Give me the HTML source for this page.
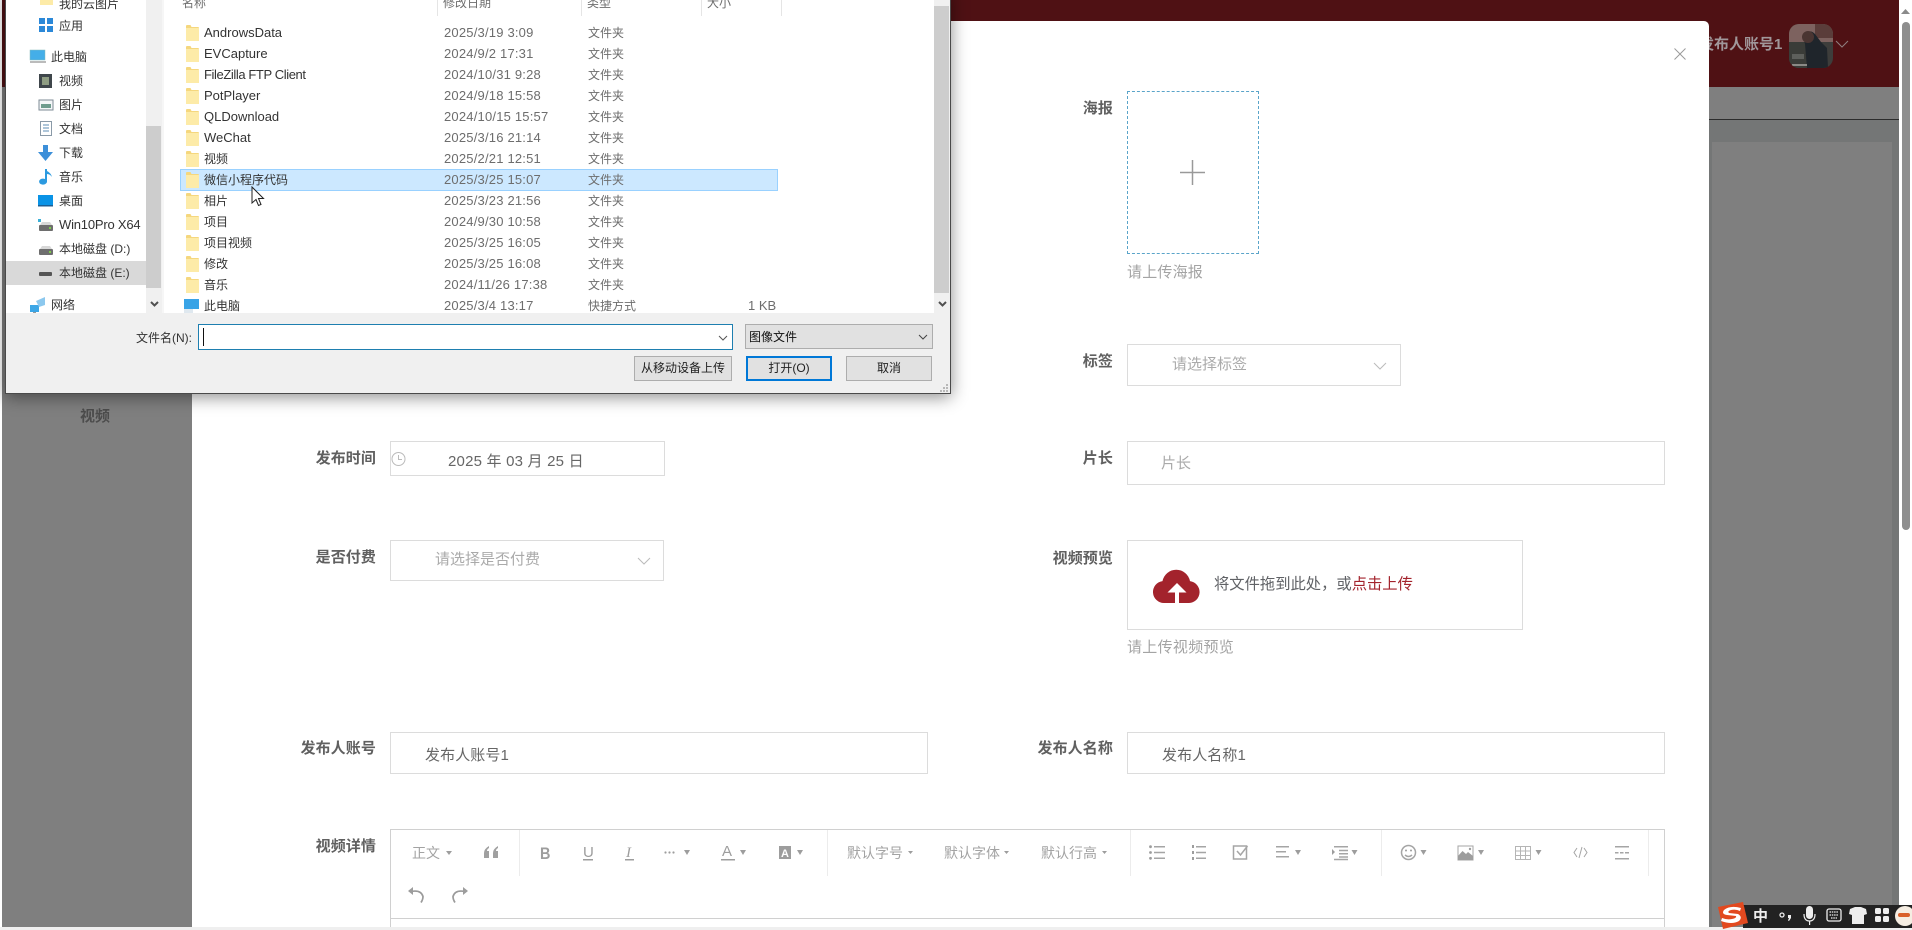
<!DOCTYPE html>
<html lang="zh"><head><meta charset="utf-8"><title>发布视频</title>
<style>
html,body{margin:0;padding:0;width:1912px;height:930px;overflow:hidden;background:#fff}
body{position:relative;font-family:"Liberation Sans","Noto Sans CJK SC",sans-serif}
.b{position:absolute}
.t{position:absolute;white-space:nowrap;line-height:20px;height:20px}
.l{font-size:15px;font-weight:700;color:#606060;text-align:right;width:120px;left:256px;letter-spacing:.1px}
.r{left:993px}
.f{position:absolute;box-sizing:border-box;border:1px solid #dcdcdc;background:#fff}
.v{font-size:15px;color:#666}
.p{font-size:15px;color:#aaa}
.h{font-size:14px;color:#a3a3a3}
#dlg{position:absolute;left:5px;top:-10px;width:946px;height:404px;box-sizing:border-box;background:#f0f0f0;border:1px solid #4a4a4a;border-top:0;box-shadow:0 3px 16px rgba(0,0,0,.45);overflow:hidden}
.d{position:absolute;left:0;top:10px;width:944px;height:393px}
.d .t{font-size:12px;color:#333;line-height:20px}
.n{font-size:13px!important}
.g{color:#6d6d6d!important}
.dt{font-size:13px!important;letter-spacing:.2px;color:#6d6d6d!important}
.btn{position:absolute;box-sizing:border-box;background:#e1e1e1;border:1px solid #adadad;font-size:12px;color:#222;text-align:center;line-height:22px;height:25px;top:356px}
</style></head><body>

<!-- page behind -->
<div class="b" style="left:2px;top:0;width:1897px;height:927px;background:#7f7f7f"></div>
<div class="b" style="left:2px;top:0;width:1897px;height:87px;background:#4f1114"></div>
<div class="b" style="left:1709px;top:119px;width:190px;height:1px;background:#2c2c2c"></div>
<div class="b" style="left:1709px;top:120px;width:190px;height:807px;background:#747676"></div>
<div class="b" style="left:1712px;top:142px;width:180px;height:785px;background:#7f7f7f"></div>
<div class="b" style="left:0;top:927px;width:1912px;height:3px;background:#efefef"></div>
<div class="t" style="left:1699px;top:35px;font-size:15px;font-weight:700;color:#a0979a">发布人账号1</div>
<div class="b" style="left:1789px;top:24px;width:44px;height:44px;border-radius:10px;overflow:hidden;background:#3d3d3b">
 <svg width="44" height="44" style="display:block"><rect width="44" height="18" fill="#7d625f"/><rect x="26" width="18" height="14" fill="#5a3d3a"/><rect y="18" width="22" height="26" fill="#3a3c38"/><path d="M14 12q6-8 12-2l6 8 6 6 1 20H18l-2-24z" fill="#1f252b"/><circle cx="19" cy="13" r="6" fill="#4a3532"/><rect x="3" y="30" width="12" height="5" fill="#5d5f5b"/><rect x="3" y="40" width="15" height="2" fill="#8b8a86"/></svg>
</div>
<svg class="b" style="left:1835px;top:39px" width="14" height="12"><path d="M1 2l6 6 6-6" fill="none" stroke="#8f7f80" stroke-width="1"/></svg>
<div class="t" style="left:80px;top:407px;font-size:15px;font-weight:700;color:#4c4c4c">视频</div>

<!-- scrollbar -->
<div class="b" style="left:1899px;top:0;width:13px;height:927px;background:#fff"></div>
<svg class="b" style="left:1899px;top:6px" width="13" height="10"><path d="M2 8l4.500-5 4.500 5z" fill="#8a8a8a"/></svg>
<div class="b" style="left:1902px;top:22px;width:8px;height:508px;border-radius:4px;background:#8e8e8e"></div>

<!-- modal -->
<div class="b" style="left:192px;top:21px;width:1517px;height:906px;background:#fff;border-radius:5px 5px 0 0">
</div>
<svg class="b" style="left:1673px;top:47px" width="14" height="14"><path d="M1.500 1.500l11 11M12.500 1.500l-11 11" stroke="#9a9a9a" stroke-width="1" fill="none"/></svg>

<!-- right column -->
<div class="t l r" style="top:99px">海报</div>
<div class="b" style="left:1127px;top:91px;width:132px;height:163px;box-sizing:border-box;border:1px dashed #5aa4c9"></div>
<svg class="b" style="left:1180px;top:160px" width="25" height="25"><path d="M12.500 0v25M0 12.500h25" stroke="#999" stroke-width="1.500"/></svg>
<div class="t" style="left:1127px;top:263px;font-size:15px;color:#a4a4a4;letter-spacing:.2px">请上传海报</div>

<div class="t l r" style="top:352px">标签</div>
<div class="f" style="left:1127px;top:344px;width:274px;height:42px"></div>
<div class="t p" style="left:1172px;top:355px">请选择标签</div>
<svg class="b" style="left:1373px;top:361px" width="14" height="10"><path d="M1 2l6 6 6-6" fill="none" stroke="#bbb" stroke-width="1"/></svg>

<div class="t l r" style="top:449px">片长</div>
<div class="f" style="left:1127px;top:441px;width:538px;height:44px"></div>
<div class="t p" style="left:1161px;top:454px">片长</div>

<div class="t l r" style="top:549px">视频预览</div>
<div class="f" style="left:1127px;top:540px;width:396px;height:90px"></div>
<svg class="b" style="left:1153px;top:568px" width="47" height="35"><path d="M11 35a11 11 0 0 1-1.500-21.900A14 14 0 0 1 37 13.100 11 11 0 0 1 36 35z" fill="#a3232c"/><path d="M24 15l9.500 9.500H26V35h-4V24.500h-7.500z" fill="#fff"/></svg>
<div class="t" style="left:1214px;top:575px;font-size:15.300px;color:#606266">将文件拖到此处，或<span style="color:#a3232c">点击上传</span></div>
<div class="t" style="left:1127px;top:638px;font-size:15px;color:#a4a4a4;letter-spacing:.3px">请上传视频预览</div>

<div class="t l r" style="top:739px">发布人名称</div>
<div class="f" style="left:1127px;top:732px;width:538px;height:42px"></div>
<div class="t v" style="left:1162px;top:746px;letter-spacing:.1px">发布人名称1</div>

<!-- left column -->
<div class="t l" style="top:449px">发布时间</div>
<div class="f" style="left:390px;top:441px;width:275px;height:35px"></div>
<svg class="b" style="left:391px;top:451px" width="15" height="16"><circle cx="7.500" cy="8" r="6.500" fill="none" stroke="#bbb"/><path d="M7.500 4v4.500h3.500" fill="none" stroke="#bbb"/></svg>
<div class="t" style="left:448px;top:452px;font-size:15px;color:#666;letter-spacing:.2px">2025 年 03 月 25 日</div>

<div class="t l" style="top:548px">是否付费</div>
<div class="f" style="left:390px;top:540px;width:274px;height:41px"></div>
<div class="t p" style="left:435px;top:550px">请选择是否付费</div>
<svg class="b" style="left:637px;top:556px" width="14" height="10"><path d="M1 2l6 6 6-6" fill="none" stroke="#bbb" stroke-width="1"/></svg>

<div class="t l" style="top:739px">发布人账号</div>
<div class="f" style="left:390px;top:732px;width:538px;height:42px"></div>
<div class="t v" style="left:425px;top:746px;letter-spacing:.1px">发布人账号1</div>

<div class="t l" style="top:837px">视频详情</div>

<!-- editor -->
<div class="f" style="left:390px;top:829px;width:1275px;height:98px;border-color:#d0d0d0;border-bottom:0"></div>
<div class="b" style="left:390px;top:918px;width:1275px;height:1px;background:#d0d0d0"></div>
<div class="t h" style="left:412px;top:843px">正文</div>
<div class="t h" style="left:847px;top:843px">默认字号</div>
<div class="t h" style="left:944px;top:843px">默认字体</div>
<div class="t h" style="left:1041px;top:843px">默认行高</div>
<svg class="b" style="left:0;top:0" width="1912" height="930" fill="#9d9d9d">
 <g stroke="#ececec" stroke-width="1"><path d="M519.500 830v46M827.500 830v46M1130.500 830v46M1381.500 830v46M1648.500 830v46"/></g>
 <g id="tri">
  <path d="M446 851h6l-3 4zM684 850h6l-3 5zM740 850h6l-3 5zM797 850h6l-3 5zM908 851h5l-2.500 3zM1004 851h5l-2.500 3zM1102 851h5l-2.500 3zM1295 850h6l-3 5zM1351.500 850h6l-3 5zM1420.500 850h6l-3 5zM1478 850h6l-3 5zM1535.500 850h6l-3 5z"/>
 </g>
 <!-- quote -->
 <path d="M484 858v-5q0-4 5-7v2q-2 1-2 3h2v7zM493 858v-5q0-4 5-7v2q-2 1-2 3h2v7z" fill="#a0a0a0"/>
 <text x="540" y="859" font-size="17" font-weight="700" font-family="Liberation Sans" transform="translate(540 0) scale(.85 1) translate(-540 0)">B</text>
 <text x="583" y="857" font-size="15" font-family="Liberation Sans">U</text>
 <rect x="583" y="859" width="10" height="1.500"/>
 <text x="626" y="857" font-size="15" font-style="italic" font-family="Liberation Serif">I</text>
 <rect x="625" y="859" width="9" height="1.500"/>
 <circle cx="665.500" cy="852.500" r="1.100"/><circle cx="669.500" cy="852.500" r="1.100"/><circle cx="673.500" cy="852.500" r="1.100"/>
 <text x="722" y="856" font-size="15" font-family="Liberation Sans">A</text>
 <rect x="721" y="859" width="14" height="1.500"/>
 <rect x="779" y="846" width="12" height="13"/>
 <text x="781" y="857" font-size="11" font-weight="700" fill="#fff" font-family="Liberation Sans">A</text>
 <!-- lists -->
 <g fill="none" stroke="#a5a5a5" stroke-width="1.500">
  <path d="M1154 846.700h11M1154 852.500h11M1154 858.300h11M1196 846.700h10M1196 852.500h10M1196 858.300h10"/>
  <path d="M1276 846.700h13M1276 851.700h10M1276 856.700h13"/>
  <path d="M1334 846.700h14M1339 850.500h9M1339 853.700h9M1339 857h9M1334 859.500h14"/>
  <rect x="1233.500" y="846" width="13" height="13"/>
  <path d="M1237 851l3.500 4 7-9"/>
  <circle cx="1408.500" cy="852.500" r="7"/>
  <path d="M1405 855q3.500 3 7 0"/>
  <path d="M1615 846.700h14M1615 858.700h14"/>
  <path d="M1615 852.700h3.500M1620 852.700h3.500M1625 852.700h4"/>
  <path d="M1577 848l-3 4.500 3 4.500M1584 848l3 4.500-3 4.500M1582 847l-3 11" stroke-width="1"/>
 </g>
 <circle cx="1150.500" cy="846.700" r="1.400"/><circle cx="1150.500" cy="852.500" r="1.400"/><circle cx="1150.500" cy="858.300" r="1.400"/>
 <rect x="1192" y="845" width="2" height="3"/><rect x="1192" y="851" width="2" height="3"/><rect x="1192" y="857" width="2" height="3"/>
 <path d="M1332 849v6l3-3z"/>
 <circle cx="1406" cy="850.500" r="1"/><circle cx="1411" cy="850.500" r="1"/>
 <!-- image -->
 <rect x="1458" y="846" width="15" height="14" fill="none" stroke="#a5a5a5"/>
 <path d="M1458 860v-4l4.500-5 3.500 3 2-2 5 4v4z"/><circle cx="1470" cy="849" r="1.200"/>
 <!-- table -->
 <g fill="none" stroke="#b5b5b5" stroke-width="1"><rect x="1515.500" y="846.500" width="15" height="13"/><path d="M1515 851h16M1515 855.500h16M1520.500 846v14M1525.500 846v14"/></g>
 <!-- undo redo -->
 <g fill="none" stroke="#9a9a9a" stroke-width="1.700">
  <path d="M411 891.500q10-2 12 5 0 3-2 6"/>
  <path d="M465 891.500q-10-2-12 5 0 3 2 6"/>
 </g>
 <path d="M408 891l5-4v8zM468 891l-5-4v8z"/>
</svg>

<!-- file dialog -->
<div id="dlg"><div class="d">
 <div class="b" style="left:0;top:0;width:944px;height:313px;background:#fff"></div>
 <!-- nav scrollbar -->
 <div class="b" style="left:140px;top:0;width:16px;height:313px;background:#f0f0f0"></div>
 <div class="b" style="left:140px;top:126px;width:15px;height:162px;background:#cdcdcd"></div>
 <div class="b" style="left:156px;top:0;width:2px;height:313px;background:#f6f6f6"></div>
 <!-- list scrollbar -->
 <div class="b" style="left:928px;top:0;width:16px;height:313px;background:#f0f0f0"></div>
 <div class="b" style="left:928px;top:6px;width:15px;height:287px;background:#cdcdcd"></div>
 <!-- selected rows -->
 <div class="b" style="left:0;top:261px;width:140px;height:24px;background:#d9d9d9"></div>
 <div class="b" style="left:174px;top:169px;width:598px;height:22px;box-sizing:border-box;background:#cce8ff;border:1px solid #99d1ff"></div>

 <!-- header -->
 <div class="t g" style="left:176px;top:-7px">名称</div>
 <div class="t g" style="left:437px;top:-7px">修改日期</div>
 <div class="t g" style="left:581px;top:-7px">类型</div>
 <div class="t g" style="left:701px;top:-7px">大小</div>
 <svg class="b" style="left:0;top:0" width="944" height="393">
  <path d="M431.500 0v16M575.500 0v16M695.500 0v16M775.500 0v16" stroke="#e5e5e5"/>
  <defs>
   <g id="fo"><path d="M0 1q0-1 1-1h3.500l1 2H12q1 0 1 1v13H0z" fill="#f5d77e"/><rect y="3" width="13" height="13" fill="#fdeba8"/></g>
   <g id="dr"><rect x="0" y="4" width="14" height="6" rx="1" fill="#6e6e6e"/><path d="M1 4l2-3h8l2 3z" fill="#d8d8d8"/><rect x="10" y="6" width="2" height="2" fill="#7ecb4a"/></g>
  </defs>
  <use href="#fo" x="180" y="25"/><use href="#fo" x="180" y="46"/><use href="#fo" x="180" y="67"/><use href="#fo" x="180" y="88"/><use href="#fo" x="180" y="109"/><use href="#fo" x="180" y="130"/><use href="#fo" x="180" y="151"/><use href="#fo" x="180" y="172"/><use href="#fo" x="180" y="193"/><use href="#fo" x="180" y="214"/><use href="#fo" x="180" y="235"/><use href="#fo" x="180" y="256"/><use href="#fo" x="180" y="277"/>
  <use href="#fo" x="34" y="-11"/>
  <!-- shortcut -->
  <rect x="178" y="299" width="15" height="10" fill="#38a3e6"/><rect x="178" y="309" width="9" height="4" fill="#dfe8ef"/>
  <!-- 应用 -->
  <g fill="#2b88d8"><rect x="33" y="18" width="6" height="6"/><rect x="41" y="18" width="6" height="6"/><rect x="33" y="26" width="6" height="6"/><rect x="41" y="26" width="6" height="6"/></g>
  <!-- 此电脑 -->
  <rect x="24" y="50" width="15" height="10" fill="#44aee8" stroke="#8bb" stroke-width=".5"/><path d="M24 62h16" stroke="#bbb" stroke-width="2"/>
  <!-- 视频 -->
  <rect x="33" y="74" width="13" height="14" fill="#3f464b"/><rect x="36" y="77" width="7" height="8" fill="#8f9d83"/>
  <!-- 图片 -->
  <rect x="33" y="100" width="14" height="10" fill="#f4f6f8" stroke="#7e8b95"/><rect x="35" y="104" width="10" height="4" fill="#6f9c8e"/>
  <!-- 文档 -->
  <rect x="34.500" y="121.500" width="11" height="14" fill="#fff" stroke="#8a9aa8"/><path d="M37 125h6M37 128h6M37 131h6" stroke="#5e8cb5"/>
  <!-- 下载 -->
  <path d="M37 145h5v7h5l-7.500 9-7.500-9h5z" fill="#3c8fd9"/>
  <!-- 音乐 -->
  <path d="M39 169h2v2q4 2 5 6-2-3-5-3v8a4 3 0 1 1-2-3z" fill="#2b9ae0"/>
  <!-- 桌面 -->
  <rect x="32" y="195" width="15" height="11" fill="#0a93e6"/><rect x="32" y="205" width="15" height="1.500" fill="#1c5f94"/>
  <!-- disks -->
  <g fill="#3bb0d8"><rect x="32" y="219" width="3" height="3"/><rect x="36" y="222" width="2" height="2"/></g>
  <use href="#dr" x="33" y="221"/><use href="#dr" x="33" y="245"/>
  <rect x="33" y="272" width="13" height="4" rx="1" fill="#555"/>
  <!-- 网络 -->
  <path d="M24 305h9v7h-9z" fill="#3ba6e6"/><path d="M30 301l9-4v8l-6 2z" fill="#8cc8ee"/><rect x="27" y="312" width="3" height="1" fill="#999"/>
  <!-- arrows -->
  <path d="M145 302l3.500 3.500 3.500-3.500M933 302l3.500 3.500 3.500-3.500" fill="none" stroke="#505050" stroke-width="2"/>
 </svg>

 <!-- nav text -->
 <div class="t" style="left:53px;top:-6px">我的云图片</div>
 <div class="t" style="left:53px;top:16px">应用</div>
 <div class="t" style="left:45px;top:47px">此电脑</div>
 <div class="t" style="left:53px;top:71px">视频</div>
 <div class="t" style="left:53px;top:95px">图片</div>
 <div class="t" style="left:53px;top:119px">文档</div>
 <div class="t" style="left:53px;top:143px">下载</div>
 <div class="t" style="left:53px;top:167px">音乐</div>
 <div class="t" style="left:53px;top:191px">桌面</div>
 <div class="t n" style="left:53px;top:215px;letter-spacing:-.2px">Win10Pro X64</div>
 <div class="t" style="left:53px;top:239px">本地磁盘 (D:)</div>
 <div class="t" style="left:53px;top:263px">本地磁盘 (E:)</div>
 <div class="t" style="left:45px;top:295px">网络</div>

 <!-- names -->
 <div class="t n" style="left:198px;top:23px">AndrowsData</div>
 <div class="t n" style="left:198px;top:44px">EVCapture</div>
 <div class="t n" style="left:198px;top:65px;letter-spacing:-.4px">FileZilla FTP Client</div>
 <div class="t n" style="left:198px;top:86px">PotPlayer</div>
 <div class="t n" style="left:198px;top:107px">QLDownload</div>
 <div class="t n" style="left:198px;top:128px">WeChat</div>
 <div class="t" style="left:198px;top:149px">视频</div>
 <div class="t" style="left:198px;top:170px">微信小程序代码</div>
 <div class="t" style="left:198px;top:191px">相片</div>
 <div class="t" style="left:198px;top:212px">项目</div>
 <div class="t" style="left:198px;top:233px">项目视频</div>
 <div class="t" style="left:198px;top:254px">修改</div>
 <div class="t" style="left:198px;top:275px">音乐</div>
 <div class="t" style="left:198px;top:296px;height:17px;overflow:hidden">此电脑</div>

 <!-- dates -->
 <div class="t dt" style="left:438px;top:23px">2025/3/19 3:09</div>
 <div class="t dt" style="left:438px;top:44px">2024/9/2 17:31</div>
 <div class="t dt" style="left:438px;top:65px">2024/10/31 9:28</div>
 <div class="t dt" style="left:438px;top:86px">2024/9/18 15:58</div>
 <div class="t dt" style="left:438px;top:107px">2024/10/15 15:57</div>
 <div class="t dt" style="left:438px;top:128px">2025/3/16 21:14</div>
 <div class="t dt" style="left:438px;top:149px">2025/2/21 12:51</div>
 <div class="t dt" style="left:438px;top:170px">2025/3/25 15:07</div>
 <div class="t dt" style="left:438px;top:191px">2025/3/23 21:56</div>
 <div class="t dt" style="left:438px;top:212px">2024/9/30 10:58</div>
 <div class="t dt" style="left:438px;top:233px">2025/3/25 16:05</div>
 <div class="t dt" style="left:438px;top:254px">2025/3/25 16:08</div>
 <div class="t dt" style="left:438px;top:275px">2024/11/26 17:38</div>
 <div class="t dt" style="left:438px;top:296px;height:17px;overflow:hidden">2025/3/4 13:17</div>

 <!-- types -->
 <div class="t g" style="left:582px;top:23px">文件夹</div>
 <div class="t g" style="left:582px;top:44px">文件夹</div>
 <div class="t g" style="left:582px;top:65px">文件夹</div>
 <div class="t g" style="left:582px;top:86px">文件夹</div>
 <div class="t g" style="left:582px;top:107px">文件夹</div>
 <div class="t g" style="left:582px;top:128px">文件夹</div>
 <div class="t g" style="left:582px;top:149px">文件夹</div>
 <div class="t g" style="left:582px;top:170px">文件夹</div>
 <div class="t g" style="left:582px;top:191px">文件夹</div>
 <div class="t g" style="left:582px;top:212px">文件夹</div>
 <div class="t g" style="left:582px;top:233px">文件夹</div>
 <div class="t g" style="left:582px;top:254px">文件夹</div>
 <div class="t g" style="left:582px;top:275px">文件夹</div>
 <div class="t g" style="left:582px;top:296px;height:17px;overflow:hidden">快捷方式</div>
 <div class="t g n" style="left:742px;top:296px;height:17px;overflow:hidden">1 KB</div>

 <!-- bottom controls -->
 <div class="t" style="left:130px;top:328px">文件名(N):</div>
 <div class="b" style="left:192px;top:324px;width:535px;height:26px;box-sizing:border-box;background:#fff;border:1px solid #1e7fb0"></div>
 <div class="b" style="left:197px;top:328px;width:1px;height:18px;background:#111"></div>
 <svg class="b" style="left:0;top:0" width="944" height="393"><path d="M713 336l4 4 4-4" fill="none" stroke="#555"/></svg>
 <div class="b" style="left:739px;top:324px;width:188px;height:25px;box-sizing:border-box;background:#e1e1e1;border:1px solid #adadad"></div>
 <div class="t" style="left:743px;top:327px;color:#111">图像文件</div>
 <svg class="b" style="left:0;top:0" width="944" height="393"><path d="M913 335l4 4 4-4" fill="none" stroke="#444"/></svg>
 <div class="btn" style="left:628px;width:98px">从移动设备上传</div>
 <div class="btn" style="left:740px;width:86px;border:2px solid #0078d7;line-height:21px">打开(O)</div>
 <div class="btn" style="left:840px;width:86px">取消</div>
 <svg class="b" style="left:933px;top:383px" width="10" height="10" fill="#b8b8b8"><rect x="7" y="1" width="2" height="2"/><rect x="4" y="4" width="2" height="2"/><rect x="7" y="4" width="2" height="2"/><rect x="1" y="7" width="2" height="2"/><rect x="4" y="7" width="2" height="2"/><rect x="7" y="7" width="2" height="2"/></svg>
</div></div>

<!-- mouse cursor -->
<svg class="b" style="left:251px;top:186px" width="14" height="22"><path d="M1 1v16l4-3.500 2.500 6 2.500-1-2.500-6H12.500z" fill="#fff" stroke="#222" stroke-width="1"/></svg>

<!-- IME bar -->
<div class="b" style="left:1743px;top:905px;width:169px;height:23px;background:#222"></div>
<svg class="b" style="left:1714px;top:900px" width="198" height="30">
 <path d="M4 7l25-5 5 21-25 6z" fill="#e2491f"/>
 <path d="M27 8q-11-3-17 2-3 4 3 5l9 1q1 2-4 3-5 1-10-1l-1 3q11 4 18 0 4-4-1-7l-9-1q-2-2 2-3 5-1 9 1z" fill="#fff"/>
 <circle cx="191" cy="16" r="10" fill="#f5ede2"/><rect x="184" y="13" width="12" height="4" rx="2" fill="#d9602a"/>
 <g fill="#eee">
  <circle cx="68" cy="15" r="2" fill="none" stroke="#eee" stroke-width="1.300"/>
  <path d="M74 15h3v3l-2 3-1-.500 1-2.500h-1z"/>
  <rect x="92" y="6" width="7" height="13" rx="3.500"/>
  <path d="M90 14q0 7 5.500 7t5.500-7" fill="none" stroke="#eee" stroke-width="1.200"/><rect x="95" y="21" width="1.200" height="4"/>
  <rect x="113" y="9" width="14" height="12" rx="2" fill="none" stroke="#eee" stroke-width="1.300"/>
  <path d="M115.500 12h9M115.500 15h9M117 18h6" stroke="#eee" stroke-width="1.300" stroke-dasharray="1.500 .8"/>
  <path d="M136 9l5-2h6l5 2 1 5-3 1v9h-12v-9l-3-1z"/>
  <rect x="161" y="8" width="6" height="6" rx="1.500"/><rect x="169" y="8" width="6" height="6" rx="1.500"/><rect x="161" y="16" width="6" height="6" rx="1.500"/><rect x="169" y="16" width="6" height="6" rx="1.500"/>
 </g>
</svg>
<div class="t" style="left:1753px;top:907px;font-size:15px;font-weight:700;color:#eee">中</div>
</body></html>
